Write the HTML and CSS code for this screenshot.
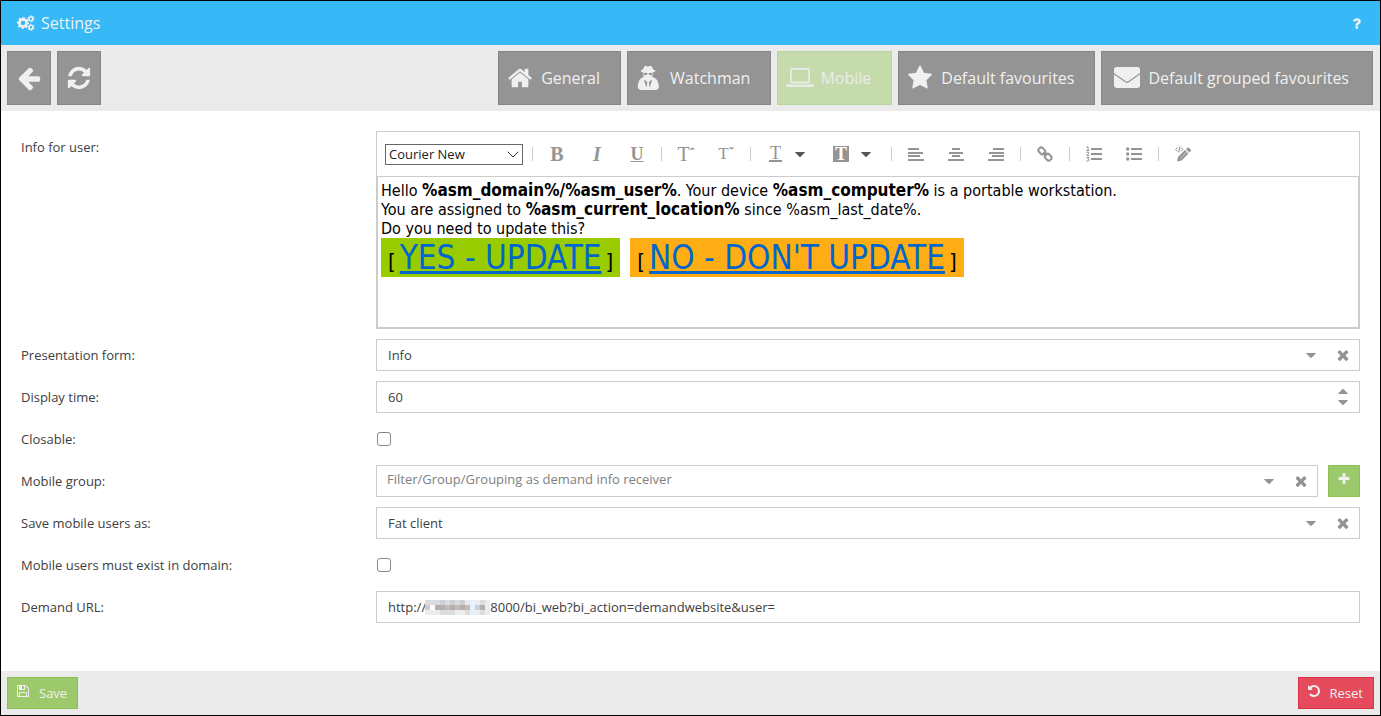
FILE: index.html
```
<!DOCTYPE html>
<html lang="en">
<head>
<meta charset="utf-8">
<title>Settings</title>
<link rel="stylesheet" href="styles.css">
</head>
<body>
<svg class="defs" aria-hidden="true">
  <symbol id="times" viewBox="0 0 1792 1792"><path d="M1490 1322q0 40-28 68l-136 136q-28 28-68 28t-68-28l-294-294-294 294q-28 28-68 28t-68-28l-136-136q-28-28-28-68t28-68l294-294-294-294q-28-28-28-68t28-68l136-136q28-28 68-28t68 28l294 294 294-294q28-28 68-28t68 28l136 136q28 28 28 68t-28 68l-294 294 294 294q28 28 28 68z"/></symbol>
  <symbol id="caret" viewBox="0 0 10 5"><path d="M0.500 0h9q.6.300.2.800L5.500 4.700q-.5.400-1 0L.3.800Q-.1.300.5 0z"/></symbol>
</svg>
<div class="window">
  <header class="titlebar">
    <svg class="icon-cogs" viewBox="0 0 18 16" stroke="currentColor">
      <circle cx="6" cy="8" r="3.600" stroke-width="2.600"/>
      <circle cx="6" cy="8" r="5.200" stroke-width="1.800" stroke-dasharray="2.040 2.044" stroke-dashoffset="1"/>
      <circle cx="14" cy="3.700" r="1.900" stroke-width="1.400"/>
      <circle cx="14" cy="3.700" r="2.900" stroke-width="1.200" stroke-dasharray="1.500 1.537"/>
      <circle cx="14" cy="12.300" r="1.900" stroke-width="1.400"/>
      <circle cx="14" cy="12.300" r="2.900" stroke-width="1.200" stroke-dasharray="1.500 1.537"/>
    </svg>
    <h1>Settings</h1>
    <button class="help" aria-label="Help"><svg viewBox="0 0 1792 1792"><path d="M1088 1256v240q0 16-12 28t-28 12h-240q-16 0-28-12t-12-28v-240q0-16 12-28t28-12h240q16 0 28 12t12 28zm316-600q0 54-15.500 101t-35 76.500-55 59.500-57.500 43.500-61 35.500q-41 23-68.500 65t-27.500 67q0 17-12 32.500t-28 15.500h-240q-15 0-25.500-18.500t-10.500-37.500v-45q0-83 65-156.500t143-108.500q59-27 84-56t25-76q0-42-46.500-74t-107.500-32q-65 0-108 29-35 25-107 115-13 16-31 16-12 0-25-8l-164-125q-13-10-15.500-25t5.500-28q160-266 464-266 80 0 161 31t146 83 106 127.500 41 158.500z"/></svg></button>
  </header>

  <nav class="toolbar">
    <button class="tool square" aria-label="Back"><svg viewBox="0 0 1792 1792"><path d="M1664 896v128q0 53-32.500 90.500t-84.500 37.500h-704l293 294q38 36 38 90t-38 90l-75 76q-37 37-90 37-52 0-91-37l-651-652q-37-37-37-90 0-52 37-91l651-650q38-38 91-38 52 0 90 38l75 74q38 38 38 91t-38 91l-293 293h704q52 0 84.500 37.500t32.500 90.500z"/></svg></button>
    <button class="tool square" aria-label="Refresh"><svg viewBox="0 0 1792 1792"><path d="M1639 1056q0 5-1 7-64 268-268 434.500t-478 166.500q-146 0-282.500-55t-243.500-157l-129 129q-19 19-45 19t-45-19-19-45v-448q0-26 19-45t45-19h448q26 0 45 19t19 45-19 45l-137 137q71 66 161 102t187 36q134 0 250-65t186-179q11-17 53-117 8-23 30-23h192q13 0 22.500 9.500t9.500 22.500zm25-800v448q0 26-19 45t-45 19h-448q-26 0-45-19t-19-45 19-45l138-138q-148-137-349-137-134 0-250 65t-186 179q-11 17-53 117-8 23-30 23h-199q-13 0-22.500-9.500t-9.500-22.500v-7q65-268 270-434.500t480-166.500q146 0 284 55.500t245 156.500l130-129q19-19 45-19t45 19 19 45z"/></svg></button>
    <span class="spacer"></span>
    <button class="tool"><svg viewBox="0 0 1792 1792"><path d="M1472 992v480q0 26-19 45t-45 19h-384v-384h-256v384h-384q-26 0-45-19t-19-45v-480q0-1 .5-3t.5-3l575-474 575 474q1 2 1 6zm223-69l-62 74q-8 9-21 11h-3q-13 0-21-7l-692-577-692 577q-12 8-24 7-13-2-21-11l-62-74q-8-10-7-23.500t11-21.500l719-599q32-26 76-26t76 26l244 204v-195q0-14 9-23t23-9h192q14 0 23 9t9 23v408l219 182q10 8 11 21.500t-7 23.500z"/></svg>General</button>
    <button class="tool"><svg viewBox="0 0 28 28"><path d="M5 6.500q0-.8 2.500-1.600L9 1.500Q10 .3 11.500 1.300q1.300.7 2.600 0 2-1 3 .2l1.400 3.400q2.500.8 2.500 1.600 0 .9-2.700 1.500v2.500l-1.500 1.900q5.500 1.600 7 6.300 1 3.300.8 5.500-.4 2.600-3.300 2.800H5Q2.500 26.800 2 24.200q-.2-2.200.7-5.500 1.500-4.700 6-6.300L7.600 10.500V8Q5 7.400 5 6.500z"/><path fill="#949494" d="M8 8.600q2.600-.6 4.500.5h1q1.900-1.100 4.500-.5.300 2.200-1.800 2.500-1.900 0-2.700-1.500h-1q-.8 1.500-2.700 1.500-2.100-.3-1.800-2.500zM8.500 15.500l3 2.300.7 1.700-1 4.600zM17.500 15.500l-3 2.300-.7 1.700 1 4.600z"/></svg>Watchman</button>
    <button class="tool active"><svg class="wide" viewBox="0 0 28 20"><path fill-rule="evenodd" d="M6.500 0h15q2.500 0 2.500 2.500v10.200q0 2.500-2.500 2.500h-15Q4 15.200 4 12.700V2.500Q4 0 6.500 0zm0 1.700q-.8 0-.8.800v10.200q0 .8.800.8h15q.8 0 .8-.8V2.500q0-.8-.8-.8zM0 16.500h28v1.300q-.2 1.200-2 1.200H2q-1.800 0-2-1.200zm12.800.7q-.4.300 0 .6h2.400q.4-.3 0-.6z"/></svg>Mobile</button>
    <button class="tool"><svg viewBox="0 0 1792 1792"><path d="M1728 647q0 22-26 48l-363 354 86 500q1 7 1 20 0 21-10.500 35.500t-30.500 14.500q-19 0-40-12l-449-236-449 236q-22 12-40 12-21 0-31.500-14.500t-10.500-35.500q0-6 2-20l86-500-364-354q-25-27-25-48 0-37 56-46l502-73 225-455q19-41 49-41t49 41l225 455 502 73q56 9 56 46z"/></svg>Default favourites</button>
    <button class="tool mail"><svg viewBox="0 0 26 22"><path d="M0 2.500Q0 0 2.500 0h21Q26 0 26 2.500V5q0 1-1 1.800L14.500 14Q13 15 11.500 14L1 6.800Q0 6 0 5zM0 7.600L11.500 15.500q1.500.9 3 0L26 7.600v11Q26 21 23.500 21h-21Q0 21 0 18.600z"/></svg>Default grouped favourites</button>
  </nav>

  <main class="form">
    <div class="row">
      <span class="label" id="info-label">Info for user:</span>
      <div class="editor">
        <div class="editor-tools">
          <div class="font-box"><select aria-label="Font"><option>Courier New</option></select><svg viewBox="0 0 12 7" stroke="#333"><path d="M.7.700L6 6 11.300.700"/></svg></div>
          <span class="sep"></span>
          <button class="b" aria-label="Bold">B</button>
          <button class="i" aria-label="Italic">I</button>
          <button class="u" aria-label="Underline">U</button>
          <span class="sep"></span>
          <button class="t" aria-label="Larger text">T<svg class="mini up" viewBox="0 0 10 5"><use href="#caret"/></svg></button>
          <button class="t small" aria-label="Smaller text">T<svg class="mini" viewBox="0 0 10 5"><use href="#caret"/></svg></button>
          <span class="sep"></span>
          <button class="pick" aria-label="Text colour"><span class="t-color">T</span><svg class="dark" viewBox="0 0 10 5"><use href="#caret"/></svg></button>
          <button class="pick back" aria-label="Background colour"><span class="t-back">T</span><svg class="dark" viewBox="0 0 10 5"><use href="#caret"/></svg></button>
          <span class="sep"></span>
          <button aria-label="Align left"><svg class="ico" viewBox="0 0 16 14"><path d="M0 1h11v2H0zM0 5h15v2H0zM0 8h12v2H0zM0 12h16v2H0z"/></svg></button>
          <button aria-label="Align centre"><svg class="ico" viewBox="0 0 16 14"><path d="M4 1h8v2H4zM1 5h14v2H1zM4 8h8v2H4zM0 12h16v2H0z"/></svg></button>
          <button aria-label="Align right"><svg class="ico" viewBox="0 0 16 14"><path d="M5 1h11v2H5zM1 5h15v2H1zM4 8h12v2H4zM0 12h16v2H0z"/></svg></button>
          <span class="sep"></span>
          <button aria-label="Link"><svg class="ico tall" viewBox="0 0 16 16"><g class="outline" stroke-width="2" transform="rotate(45 8 8)"><rect x="0" y="5.300" width="7" height="5.400" rx="2.500"/><rect x="9" y="5.300" width="7" height="5.400" rx="2.500"/><path d="M5.500 8h5"/></g></svg></button>
          <span class="sep"></span>
          <button aria-label="Numbered list"><svg class="ico tall" viewBox="0 0 16 16"><path d="M5 2h11v2H5zM5 7h11v2H5zM5 12h11v2H5z"/><path class="outline" d="M.5 1.300L2 .5V4M.3 4.500h3M.5 6.500q2-1.200 2.200.3Q2.600 8 .7 9.500H3.300M.5 11.500H3L1.700 13q1.500 0 1.500 1.200-.4 1.500-2.900.8"/></svg></button>
          <button aria-label="Bulleted list"><svg class="ico" viewBox="0 0 16 14"><circle cx="1.700" cy="2" r="1.700"/><circle cx="1.700" cy="7" r="1.700"/><circle cx="1.700" cy="12" r="1.700"/><path d="M5 1h11v2H5zM5 6h11v2H5zM5 11h11v2H5z"/></svg></button>
          <span class="sep"></span>
          <button aria-label="Edit source"><svg class="ico tall" viewBox="0 0 16 16"><path d="M3 11l7-7 3.500 3.500-7 7-4.500 1zM11 3.200l1.500-1.500q.7-.6 1.300 0l2 2q.6.600 0 1.300l-1.500 1.500z"/><path stroke="#fff" stroke-width=".6" d="M5.500 12.300L11.700 6"/><path class="outline" d="M2.500 1.500L.7 3.500 2.500 5.500M5 .5L3.700 6.500M6 1.500L7.700 3.500 6 5.500"/></svg></button>
        </div>
        <div class="editor-body" contenteditable="true" role="textbox" aria-labelledby="info-label">
          <div>Hello <b>%asm_domain%/%asm_user%</b>. Your device <b>%asm_computer%</b> is a portable workstation.</div>
          <div>You are assigned to <b>%asm_current_location%</b> since %asm_last_date%.</div>
          <div>Do you need to update this?</div>
          <div class="answers"><span class="answer yes">[<a href="#yes">YES - UPDATE</a>]</span><span class="answer no">[<a href="#no">NO - DON'T UPDATE</a>]</span></div>
        </div>
      </div>
    </div>

    <div class="row">
      <label class="label" for="form-type">Presentation form:</label>
      <div class="field"><select id="form-type"><option>Info</option></select><svg class="caret"><use href="#caret"/></svg><button class="clear" aria-label="Clear"><svg><use href="#times"/></svg></button></div>
    </div>
    <div class="row">
      <label class="label" for="time">Display time:</label>
      <div class="field"><input id="time" type="text" inputmode="numeric" value="60">
        <div class="spin"><button aria-label="Increase"><svg class="up"><use href="#caret"/></svg></button><button aria-label="Decrease"><svg><use href="#caret"/></svg></button></div></div>
    </div>
    <div class="row">
      <label class="label" for="closable">Closable:</label>
      <input class="check" id="closable" type="checkbox">
    </div>
    <div class="row">
      <label class="label" for="group">Mobile group:</label>
      <div class="field hint"><select id="group"><option>Filter/Group/Grouping as demand info receiver</option></select><svg class="caret"><use href="#caret"/></svg><button class="clear" aria-label="Clear"><svg><use href="#times"/></svg></button></div>
      <button class="add" aria-label="Add"><svg viewBox="0 0 1792 1792"><path d="M1600 736v192q0 40-28 68t-68 28h-416v416q0 40-28 68t-68 28h-192q-40 0-68-28t-28-68v-416h-416q-40 0-68-28t-28-68v-192q0-40 28-68t68-28h416v-416q0-40 28-68t68-28h192q40 0 68 28t28 68v416h416q40 0 68 28t28 68z"/></svg></button>
    </div>
    <div class="row">
      <label class="label" for="save-as">Save mobile users as:</label>
      <div class="field"><select id="save-as"><option>Fat client</option></select><svg class="caret"><use href="#caret"/></svg><button class="clear" aria-label="Clear"><svg><use href="#times"/></svg></button></div>
    </div>
    <div class="row">
      <label class="label" for="domain">Mobile users must exist in domain:</label>
      <input class="check" id="domain" type="checkbox">
    </div>
    <div class="row">
      <label class="label" for="url">Demand URL:</label>
      <div class="field"><input id="url" type="text" value="http://&nbsp;&nbsp;&nbsp;&nbsp;&nbsp;&nbsp;&nbsp;&nbsp;&nbsp;&nbsp;&nbsp;&nbsp;&nbsp;&nbsp;&nbsp;&nbsp;&nbsp;&nbsp;&nbsp;8000/bi_web?bi_action=demandwebsite&amp;user=">
        <svg class="redacted" viewBox="0 0 65 15" shape-rendering="crispEdges" aria-hidden="true"><path fill="#ececee" d="M0 0h65v15H0z"/><path fill="#dcdcde" d="M0 0h15v5H0zM20 0h5v5h-5zM30 0h5v5h-5zM55 0h5v15h-5zM15 10h15v5H15zM40 10h5v5h-5z"/><path fill="#cdcfd6" d="M15 0h5v5h-5zM25 0h5v5h-5zM35 0h5v5h-5zM0 5h5v5H0zM50 5h5v5h-5z"/><path fill="#b3afb0" d="M10 5h10v5H10zM25 5h5v5h-5zM35 5h5v5h-5zM55 5h5v5h-5z"/><path fill="#c7bab3" d="M20 5h5v5h-5zM30 5h5v5h-5zM40 5h5v5h-5z"/><path fill="#e5f1fb" d="M45 0h5v15h-5z"/><path fill="#fff" d="M5 5h5v5H5z"/></svg>
      </div>
    </div>
  </main>

  <footer class="footer">
    <button class="action save"><svg viewBox="0 0 1792 1792"><path d="M512 1536h768v-384h-768v384zm896 0h128v-896q0-14-10-38.500t-20-34.500l-281-281q-10-10-34-20t-39-10v416q0 40-28 68t-68 28h-576q-40 0-68-28t-28-68v-416h-128v1280h128v-416q0-40 28-68t68-28h832q40 0 68 28t28 68v416zm-384-928v-320q0-13-9.500-22.500t-22.500-9.500h-192q-13 0-22.500 9.500t-9.500 22.500v320q0 13 9.500 22.500t22.500 9.500h192q13 0 22.500-9.500t9.500-22.500zm640 32v928q0 40-28 68t-68 28h-1344q-40 0-68-28t-28-68v-1344q0-40 28-68t68-28h928q40 0 88 20t76 48l280 280q28 28 48 76t20 88z"/></svg>Save</button>
    <button class="action reset"><svg viewBox="0 0 1792 1792"><path d="M1664 896q0 156-61 298t-164 245-245 164-298 61q-172 0-327-72.500t-264-204.500q-7-10-6.500-22.500t8.500-20.500l137-138q10-9 25-9 16 2 23 12 73 95 179 147t225 52q104 0 198.500-40.500t163.500-109.500 109.500-163.500 40.500-198.500-40.500-198.500-109.500-163.500-163.500-109.500-198.500-40.500q-98 0-188 35.500t-160 101.500l137 138q31 30 14 69-17 40-59 40h-448q-26 0-45-19t-19-45v-448q0-42 40-59 39-17 69 14l130 129q107-101 244.500-156.500t284.500-55.500q156 0 298 61t245 164 164 245 61 298z"/></svg>Reset</button>
  </footer>
</div>
</body>
</html>
```
FILE: styles.css
```
* { box-sizing: border-box; }
body {
  margin: 0;
  font: 13px/18px "Open Sans", sans-serif;
  color: #404040;
  background: #fff;
}
button, input, select { font: inherit; color: inherit; margin: 0; }
button { cursor: pointer; padding: 0; border: 0; background: none; }
svg { display: block; flex: none; fill: currentColor; }
.defs { position: absolute; width: 0; height: 0; }

.window {
  display: flex;
  flex-direction: column;
  min-height: 100vh;
  border: 1px solid #000;
}

.titlebar {
  display: flex;
  align-items: center;
  height: 44px;
  padding: 0 16px;
  gap: 6px;
  color: #f0f0f0;
  background: #36b9f6;
}
.titlebar h1 { margin: 0; flex: 1; font-size: 16px; line-height: 22px; font-weight: 400; }
.icon-cogs { width: 18px; height: 16px; fill: none; }
.help svg { width: 15px; height: 15px; }

.toolbar {
  display: flex;
  gap: 6px;
  padding: 6px;
  padding-right: 7px;
  background: #ebebeb;
}
.spacer { flex: 1; }
.tool {
  display: flex;
  align-items: center;
  gap: 8px;
  height: 54px;
  padding: 0 20px 0 8px;
  border: 1px solid #868686;
  font-size: 16px;
  line-height: 22px;
  white-space: nowrap;
  color: #f0f0f0;
  background: #949494;
}
.tool svg { width: 26px; height: 26px; }
.tool svg.wide { width: 28px; height: 20px; }
.tool.mail { padding: 0 23px 0 12px; }
.tool.mail svg { height: 22px; }
.tool.square { width: 44px; padding: 0; justify-content: center; }
.tool.active { gap: 6px; border-color: #bcd6a0; background: #c5dbab; color: #ebebeb; }

.form {
  flex: 1;
  display: flex;
  flex-direction: column;
  gap: 10px;
  padding: 20px;
}
.row { display: flex; align-items: flex-start; min-height: 32px; }
.label { flex: none; width: 355px; padding-top: 7px; }

.editor { flex: 1; min-width: 0; border: 1px solid #ccc; }
.editor-tools {
  display: flex;
  align-items: center;
  height: 44px;
  padding-left: 8px;
  color: #949494;
}
.editor-tools button {
  display: flex;
  align-items: center;
  justify-content: center;
  width: 40px;
  height: 24px;
  font: 700 20px/24px "Liberation Serif", serif;
}
.editor-tools .sep { width: 1px; height: 14px; margin: 0 4px; background: #ccc; }
.editor-tools .i { font-style: italic; }
.editor-tools .u { font-size: 18px; text-decoration: underline; }
.editor-tools .t { font-weight: 400; align-items: flex-start; }
.editor-tools .t.small { font-size: 17px; }
.mini { width: 5px; height: 3px; margin-top: 5px; }
.up { transform: rotate(180deg); }
.editor-tools .pick { width: 66px; gap: 13px; padding-left: 14px; justify-content: flex-start; font-weight: 400; }
.editor-tools .pick.back { gap: 12px; padding-left: 12px; }
.t-color { width: 13px; height: 15px; line-height: 12px; border-bottom: 2px solid #949494; font-size: 18px; }
.t-back { width: 16px; height: 16px; line-height: 16px; font-size: 18px; font-weight: 700; color: #fff; background: #949494; }
.dark { width: 10px; height: 5px; color: #555; }
.ico { width: 16px; height: 14px; }
.ico.tall { height: 16px; }
.outline { fill: none; stroke: currentColor; }
.font-box {
  display: flex;
  align-items: center;
  width: 138px;
  height: 21px;
  margin-right: 5px;
  padding-right: 3px;
  border: 1px solid #666;
  color: #222;
}
.font-box select { padding-left: 3px; }
.font-box svg { width: 12px; height: 7px; fill: none; }

select {
  flex: 1;
  min-width: 0;
  height: 100%;
  padding: 0;
  border: 0;
  appearance: none;
  background: none;
}

.editor-body {
  min-height: 152px;
  padding: 4px 3px;
  border: 1px solid #ccc;
  border-bottom-width: 1px;
  font: 16px/19px "DejaVu Sans Condensed", "DejaVu Sans", sans-serif;
  color: #000;
}
.editor-body b { font-size: 17px; line-height: 1; }
.answers { display: flex; gap: 10px; }
.answer { height: 39px; padding: 0 7px; font-size: 22px; line-height: 39px; }
.answer a { margin: 0 4px; font-size: 33px; line-height: 39px; color: #06c; text-decoration: underline; }
.yes { background: #9c0; }
.no { background: #ffad15; }

.field {
  position: relative;
  flex: 1;
  display: flex;
  align-items: center;
  min-width: 0;
  height: 32px;
  padding-left: 11px;
  border: 1px solid #ccc;
  background: #fff;
}
.field input { flex: 1; min-width: 0; height: 100%; padding: 0; border: 0; outline: 0; background: none; }
.hint { padding-left: 10px; color: #808080; }
.hint select { padding-bottom: 4px; }
.caret { width: 10px; height: 5px; color: #949494; }
.clear { display: grid; place-items: center; width: 32px; height: 30px; margin-left: 11px; color: #949494; }
.clear svg { width: 16px; height: 16px; }
.spin { display: grid; gap: 6px; width: 32px; justify-items: center; color: #949494; }
.spin button, .spin svg { width: 10px; height: 5px; }
.redacted { position: absolute; left: 48px; top: 8px; width: 65px; height: 15px; }
.check {
  appearance: none;
  width: 14px;
  height: 14px;
  margin-top: 9px;
  margin-left: 1px;
  border: 1px solid #888;
  border-radius: 3px;
  background: #fff;
}
.check:checked { background: #949494; }
.add {
  display: grid;
  justify-items: center;
  align-content: start;
  width: 32px;
  height: 32px;
  margin-left: 10px;
  padding-top: 6px;
  border: 1px solid #8cc152;
  color: #f0f0f0;
  background: #9dc96d;
}
.add svg { width: 14px; height: 14px; }

.footer {
  display: flex;
  justify-content: space-between;
  padding: 6px;
  background: #ebebeb;
}
.action {
  display: flex;
  align-items: center;
  gap: 9px;
  height: 32px;
  padding: 0 10px 0 8px;
  border: 1px solid;
  color: #f0f0f0;
}
.action svg { width: 14px; height: 14px; margin-bottom: 4px; }
.save { background: #9dc96d; border-color: #8cc152; }
.reset { background: #e54b5c; border-color: #da3148; }
```
